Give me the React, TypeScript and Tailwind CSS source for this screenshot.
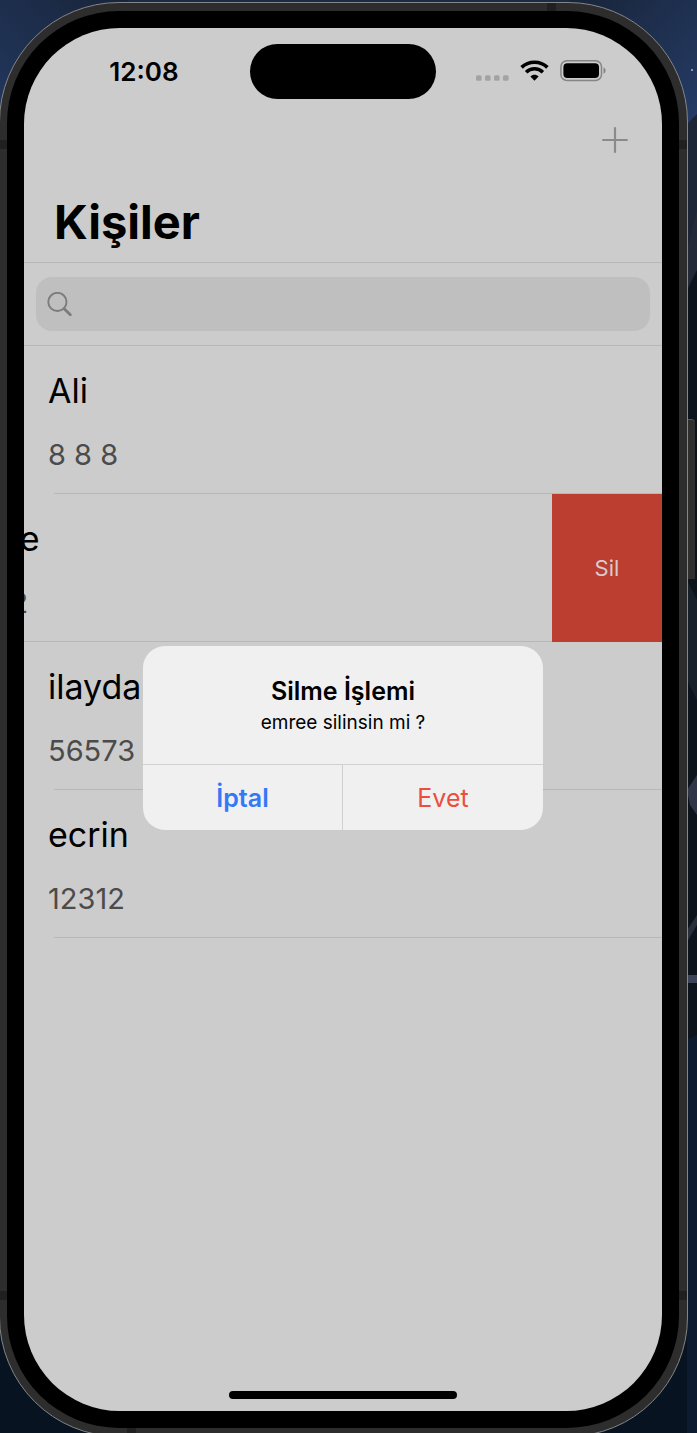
import React from "react";

type Contact = { name: string; phone: string; swiped?: boolean };

const contacts: Contact[] = [
  { name: "Ali", phone: "8 8 8" },
  { name: "emree", phone: "34332", swiped: true },
  { name: "ilayda", phone: "56573" },
  { name: "ecrin", phone: "12312" },
];

function WifiIcon() {
  return (
    <svg width="29" height="22" viewBox="0 0 29 22" aria-hidden="true">
      <g fill="none" stroke="#000" strokeWidth="3.6">
        <path d="M1.6 7.4C8.6 0.5 20.4 0.5 27.4 7.4" />
        <path d="M6.1 12.2C10.8 7.6 18.2 7.6 22.9 12.2" />
      </g>
      <path d="M14.5 20.8L10.4 16.6C12.6 14.2 16.4 14.2 18.6 16.6Z" fill="#000" />
    </svg>
  );
}

function BatteryIcon() {
  return (
    <svg width="46" height="22" viewBox="0 0 46 22" aria-hidden="true">
      <rect x="0.9" y="0.8" width="40.6" height="19.6" rx="6" fill="none" stroke="#858585" strokeWidth="1.5" />
      <rect x="3.4" y="3.2" width="35.6" height="14.8" rx="4" fill="#000" />
      <path d="M43.5 7.4C46.3 8.4 46.3 12.8 43.5 13.8Z" fill="#858585" />
    </svg>
  );
}

function StatusBar() {
  return (
    <div className="grid grid-cols-[1fr_186px_1fr] items-center pt-4">
      <time className="pl-[14px] text-center text-[26px] leading-8 font-semibold">12:08</time>
      <div className="h-[55px] rounded-full bg-black" />
      <div className="flex items-center justify-center gap-[11px] pr-4 pb-[2px]">
        <svg width="33" height="22" viewBox="0 0 33 22" aria-hidden="true" fill="#a3a3a3">
          <rect x="0" y="15.2" width="5.6" height="5.6" rx="1.6" />
          <rect x="9" y="15.2" width="5.6" height="5.6" rx="1.6" />
          <rect x="18" y="15.2" width="5.6" height="5.6" rx="1.6" />
          <rect x="27" y="15.2" width="5.6" height="5.6" rx="1.6" />
        </svg>
        <WifiIcon />
        <BatteryIcon />
      </div>
    </div>
  );
}

function Header() {
  return (
    <header className="border-b border-[#b7b7b7]">
      <StatusBar />
      <div className="flex justify-end px-[34px] pt-7">
        <button type="button" aria-label="Ekle">
          <svg className="block" width="26" height="26" viewBox="0 0 26 26" fill="none" stroke="#8a8a8a" strokeWidth="2.2" strokeLinecap="round">
            <path d="M13 1.1V24.9M1.1 13H24.9" />
          </svg>
        </button>
      </div>
      <h1 className="px-[30px] pt-10 pb-3 text-[47px] leading-[57px] font-bold">Kişiler</h1>
    </header>
  );
}

function SearchBar() {
  return (
    <div className="border-b border-[#b7b7b7] px-3 py-[14px]">
      <label className="flex h-[54px] items-center gap-2 rounded-2xl bg-[#bfbfbf] px-[11px]">
        <svg width="25" height="25" viewBox="0 0 25 25" fill="none" stroke="#7c7c7c" strokeLinecap="round" aria-hidden="true">
          <circle cx="10.4" cy="9.9" r="9.1" strokeWidth="1.9" />
          <path d="M17.2 16.7L23.3 22.8" strokeWidth="2.8" />
        </svg>
        <input type="search" aria-label="Ara" className="min-w-0 flex-1 bg-transparent text-[26px] outline-none" />
      </label>
    </div>
  );
}

function ContactRow({ name, phone, swiped }: Contact) {
  return (
    <li className={swiped ? "flex justify-end overflow-hidden" : "flex"}>
      <div className={swiped ? "w-full shrink-0 border-b border-[#b7b7b7]" : "w-full"}>
        <div className="px-6 pt-[23px] pb-5">
          <p className="text-[34px] leading-[44px]">{name}</p>
          <p className="pt-[23px] text-[29px] leading-[37px] text-[#4b4b4b]">{phone}</p>
        </div>
        {!swiped && <div className="ml-[30px] border-b border-[#b7b7b7]" />}
      </div>
      {swiped && (
        <button type="button" className="w-[110px] shrink-0 bg-[#bc3e30] text-[22px] text-[#d6cccc]">
          Sil
        </button>
      )}
    </li>
  );
}

function DeleteAlert() {
  return (
    <div className="absolute inset-0 flex items-center justify-center pt-[37px]">
      <div role="alertdialog" aria-labelledby="alert-title" aria-describedby="alert-text" className="w-[400px] overflow-hidden rounded-[22px] bg-[#f0f0f0] text-center">
        <div className="px-6 pt-[29px] pb-[29px]">
          <h2 id="alert-title" className="text-[25px] leading-8 font-semibold">Silme İşlemi</h2>
          <p id="alert-text" className="pt-1 text-[19px] leading-6">emree silinsin mi ?</p>
        </div>
        <div className="grid grid-cols-2 border-t border-[#d0d0d0] text-[25px]">
          <button type="button" className="h-[65px] border-r border-[#d0d0d0] pt-[2px] font-semibold text-[#3478f6]">İptal</button>
          <button type="button" className="h-[65px] pt-[2px] text-[#eb4e3d]">Evet</button>
        </div>
      </div>
    </div>
  );
}

function Wallpaper() {
  return (
    <svg className="absolute inset-y-0 right-0 h-full w-[10px]" viewBox="0 0 10 1433" preserveAspectRatio="none" aria-hidden="true">
      <path d="M0 124L10 114V1433H0Z" fill="#1c2637" />
      <path d="M0 250L10 210V1433H0Z" fill="#242a38" />
      <path d="M0 290L10 270V1433H0Z" fill="#0e141b" />
      <path d="M0 580L10 600V700L0 680Z" fill="#18212a" />
      <path d="M0 790L10 775V815L3 805Z" fill="#303648" />
      <path d="M0 930L10 915V925L0 942Z" fill="#27303b" />
      <path d="M0 975H10V983H0Z" fill="#3b4557" />
      <path d="M0 1040L10 1035V1433H0Z" fill="#0c1b30" />
      <circle cx="5" cy="70" r="1" fill="#aebbd0" />
    </svg>
  );
}

export default function App() {
  return (
    <div className="relative flex min-h-screen overflow-hidden bg-linear-to-b from-[#1b2a46] via-[#0d1420] via-30% to-[#081322] pt-[2px] pr-[9px] font-['Inter',sans-serif] text-black">
      <div className="absolute top-0 left-0 size-32 bg-linear-to-bl from-[#18243a] to-[#233860]" />
      <div className="absolute top-0 right-0 size-32 bg-linear-to-br from-[#18243a] to-[#263d68]" />
      <Wallpaper />
      <div className="absolute top-[419px] right-[2px] h-40 w-[9px] rounded-tr-sm border-t border-[#555555] bg-[#2f2f2f]" />
      <div className="relative -mb-1 -ml-px flex flex-1 overflow-hidden rounded-[120px] border border-[#858585] bg-[#2d2d2d] py-2 pr-2 pl-[7px]">
        <div className="absolute inset-x-0 top-[137px] h-[9px] bg-[#202020]" />
        <div className="absolute inset-x-0 bottom-[136px] h-[9px] bg-[#202020]" />
        <div className="absolute top-0 left-[547px] h-2 w-[9px] bg-[#202020]" />
        <div className="absolute bottom-0 left-[127px] h-2 w-[9px] bg-[#202020]" />
        <div className="relative flex flex-1 rounded-[112px] bg-black p-[17px]">
          <main className="relative flex min-w-0 flex-1 flex-col overflow-hidden rounded-[96px] bg-[#cccccc]">
            <Header />
            <SearchBar />
            <ul>
              {contacts.map((contact) => (
                <ContactRow key={contact.name} {...contact} />
              ))}
            </ul>
            <div className="mt-auto flex justify-center pt-8 pb-3">
              <div className="h-2 w-[228px] rounded-full bg-black" />
            </div>
            <DeleteAlert />
          </main>
        </div>
      </div>
    </div>
  );
}
